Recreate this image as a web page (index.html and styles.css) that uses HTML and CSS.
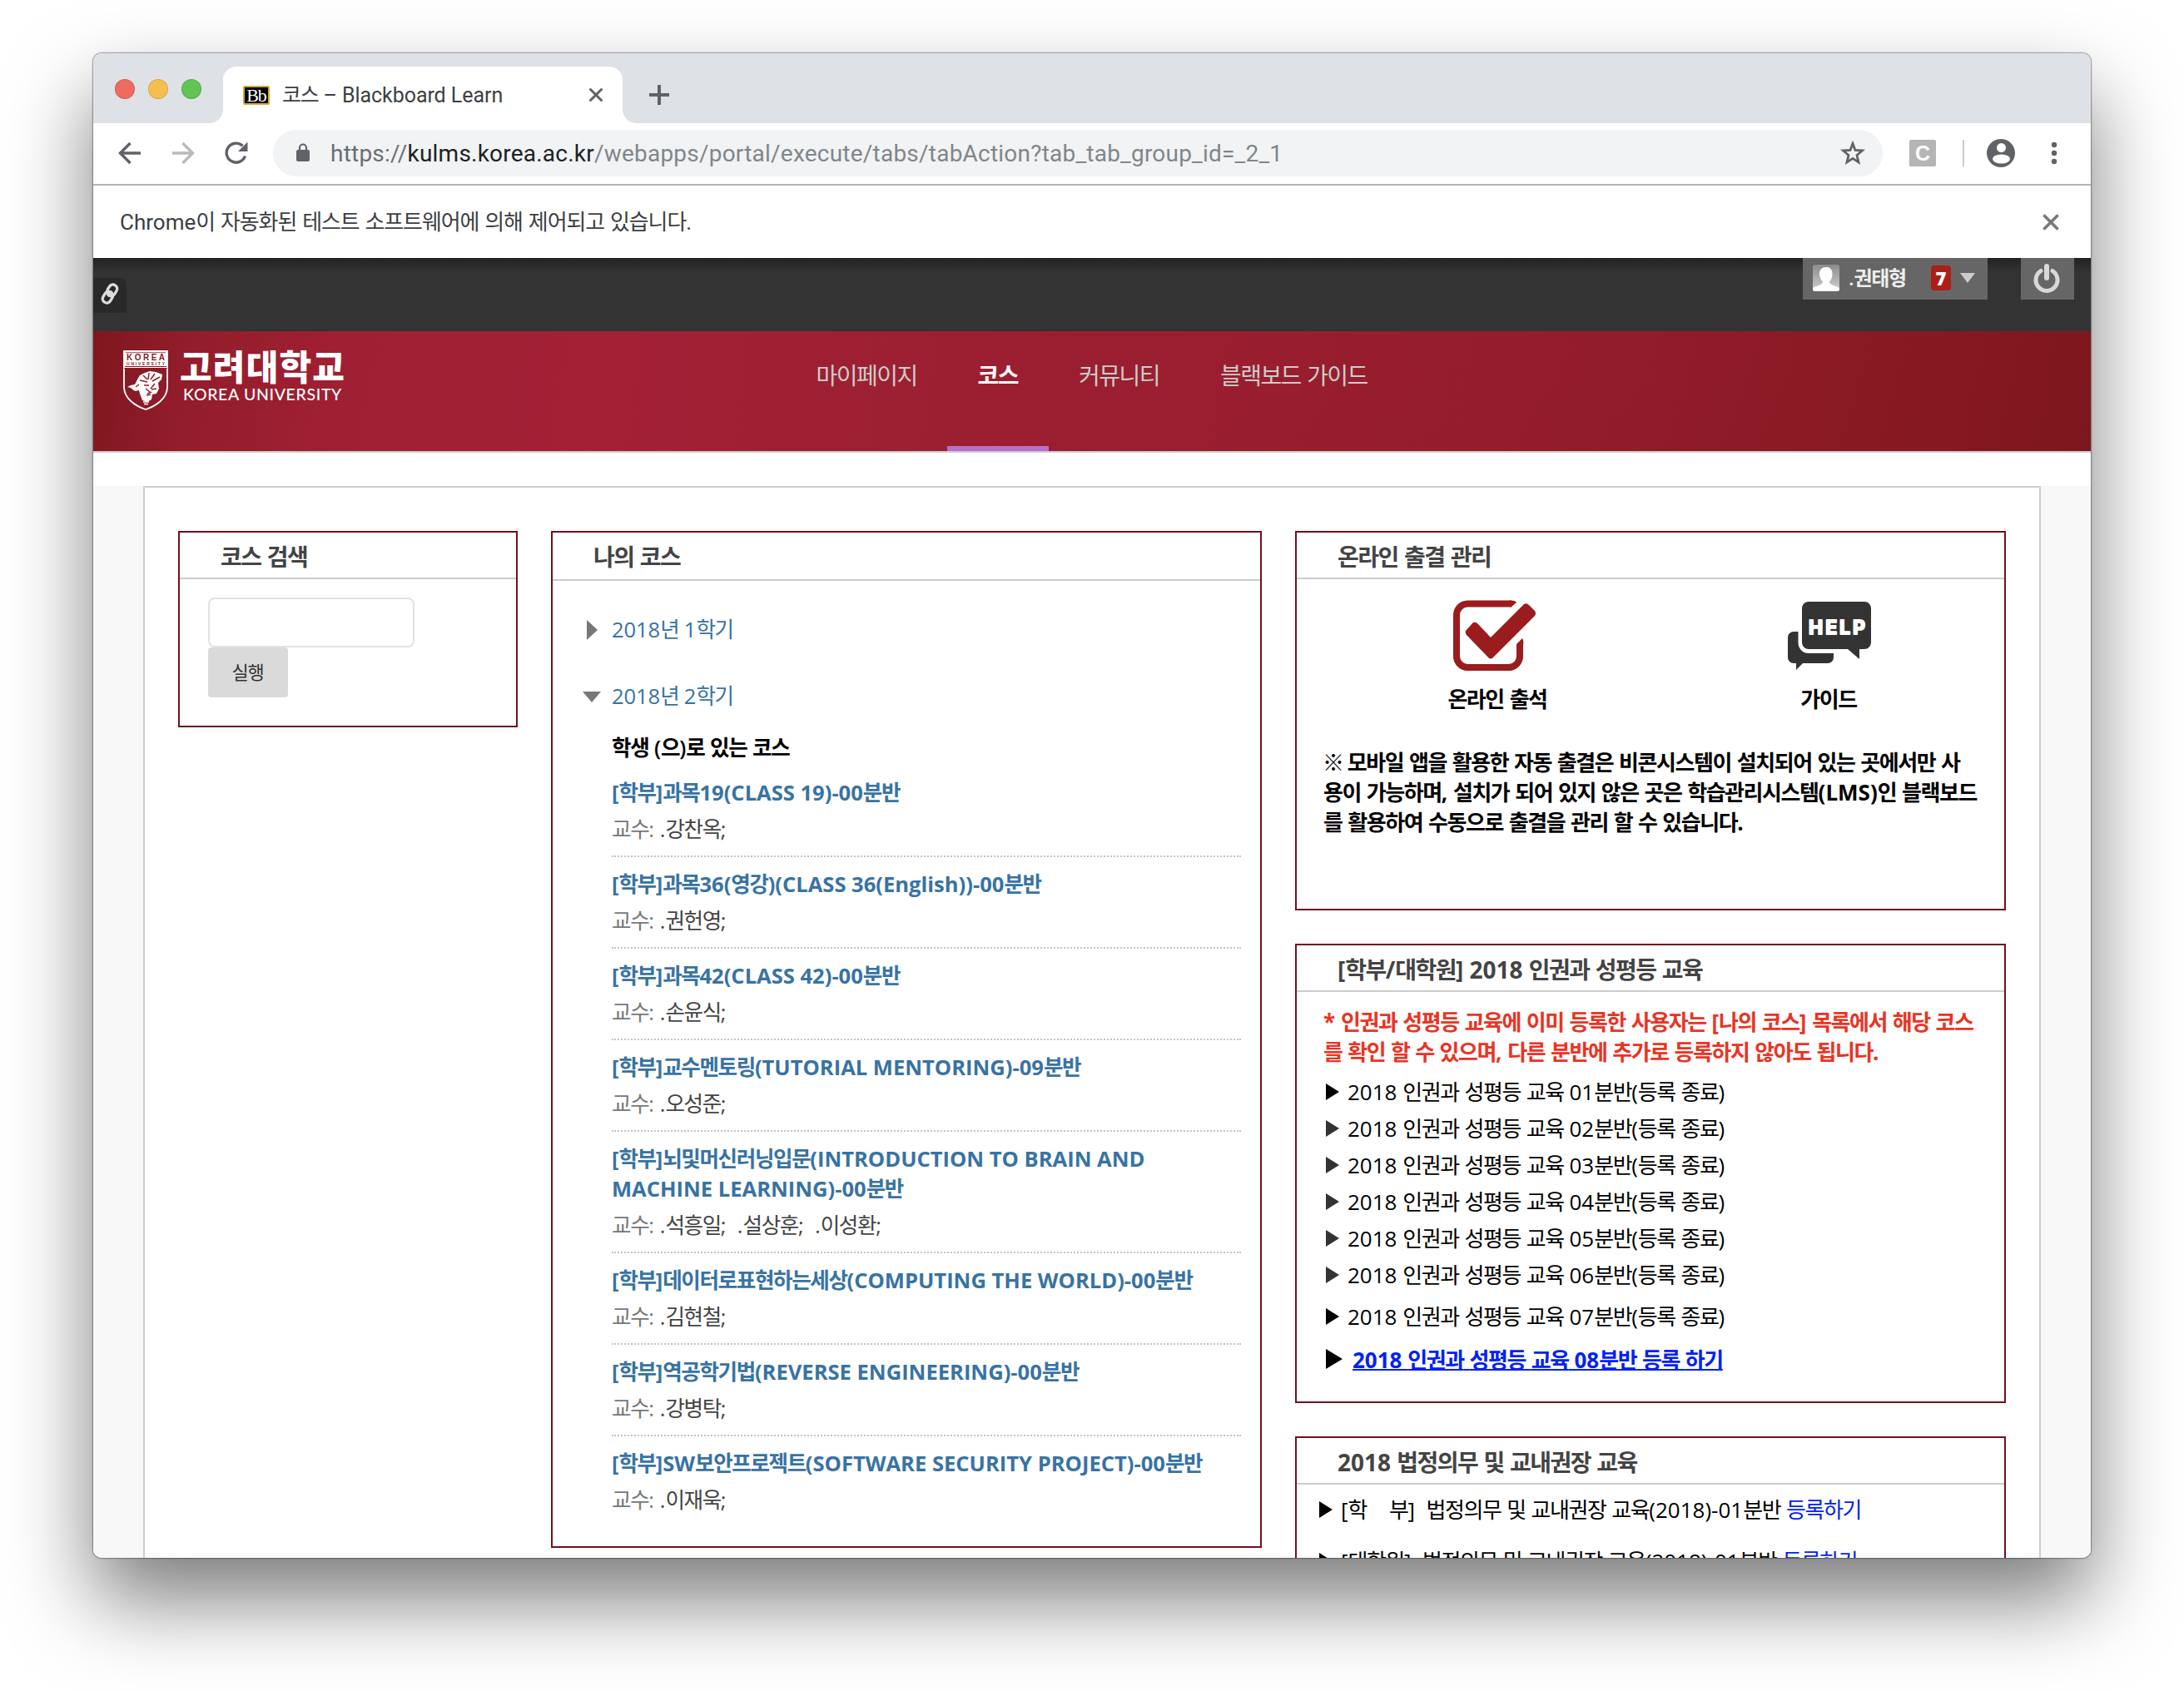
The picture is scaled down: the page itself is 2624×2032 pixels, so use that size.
FILE: index.html
```html
<!DOCTYPE html>
<html lang="ko">
<head>
<meta charset="utf-8">
<title>코스 – Blackboard Learn</title>
<link rel="stylesheet" href="styles.css">
</head>
<body>
<div class="window">
  <div class="tabstrip">
    <div class="lights"><span class="red"></span><span class="yellow"></span><span class="green"></span></div>
    <div class="tab">
      <span class="favicon">Bb</span>
      <span class="tab-title">코스 – Blackboard Learn</span>
      <svg class="tab-close" width="16" height="18" viewBox="0 0 16 18"><path d="M1.5 2.500L14.500 15.500M14.500 2.500L1.500 15.500"/></svg>
    </div>
    <svg class="plus" width="24" height="24" viewBox="0 0 24 24"><path d="M12 0V24M0 12H24"/></svg>
  </div>
  <div class="toolbar">
    <svg class="nav-ico" width="28" height="28" viewBox="0 0 28 28"><path d="M27 14H3M14.500 2L2.500 14L14.500 26"/></svg>
    <svg class="nav-ico off" width="28" height="28" viewBox="0 0 28 28"><path d="M1 14H25M13.500 2L25.500 14L13.500 26"/></svg>
    <svg class="nav-ico" width="30" height="30" viewBox="0 0 30 30"><path d="M25.500 18.500A11.500 11.500 0 1 1 22.500 6.200"/><path class="fill" d="M28.500 1.500V13H17z"/></svg>
    <div class="omnibox">
      <svg width="18" height="24" viewBox="0 0 18 24"><rect x="1" y="8" width="16" height="14" rx="2" fill="#5f6368"/><path d="M5 9V5.500a4 4 0 0 1 8 0V9" fill="none" stroke="#5f6368" stroke-width="2.200"/></svg>
      <span class="url"><span class="scheme">https://</span><b>kulms.korea.ac.kr</b>/webapps/portal/execute/tabs/tabAction?tab_tab_group_id=_2_1</span>
      <svg class="star" width="30" height="30" viewBox="0 0 30 30"><path d="M15 3.500L18 11.500L26.500 12L20 17.500L22 26L15 21.400L8 26L10 17.500L3.500 12L12 11.500z"/></svg>
    </div>
    <span class="ext">C</span>
    <span class="divider"></span>
    <svg class="profile" width="34" height="34" viewBox="0 0 34 34"><circle cx="17" cy="17" r="17" fill="#5f6368"/><circle cx="17.500" cy="10.500" r="5.500" fill="#fff"/><ellipse cx="17.500" cy="24" rx="10.500" ry="5.500" fill="#fff"/></svg>
    <svg class="dots" width="8" height="28" viewBox="0 0 8 28"><circle cx="4" cy="4" r="3.200"/><circle cx="4" cy="14" r="3.200"/><circle cx="4" cy="24" r="3.200"/></svg>
  </div>
  <div class="infobar">
    <span class="message">Chrome이 자동화된 테스트 소프트웨어에 의해 제어되고 있습니다.</span>
    <svg width="20" height="20" viewBox="0 0 20 20"><path d="M2.500 2.500L17.500 17.500M17.500 2.500L2.500 17.500"/></svg>
  </div>
  <div class="globalbar">
    <div class="quick"><svg width="24" height="30" viewBox="0 0 24 30"><g transform="rotate(32 12 15)"><rect x="7" y="3" width="10" height="14" rx="5"/><rect x="7" y="13" width="10" height="14" rx="5"/><path d="M12 11V19"/></g></svg></div>
    <div class="user">
      <svg class="avatar" width="32" height="32" viewBox="0 0 32 32"><defs><linearGradient id="av" x2="0" y2="1"><stop offset="0" stop-color="#8c8c8c"/><stop offset="1" stop-color="#d0d0d0"/></linearGradient></defs><rect width="32" height="32" rx="3" fill="url(#av)"/><path d="M16 3c5 0 7.500 3 7.500 8.500c0 4-1.500 7-3.500 9c0 4 6 4 12 7.500V29a3 3 0 0 1-3 3H3a3 3 0 0 1-3-3V28c6-3.500 12-3.500 12-7.500c-2-2-4-5-4-9C8 6 11 3 16 3z" fill="#fff"/></svg>
      <span class="name">.권태형</span>
      <span class="count">7</span>
      <span class="caret"></span>
    </div>
    <div class="power"><svg width="36" height="36" viewBox="0 0 36 36"><path d="M11 9.500A13 13 0 1 0 25 9.500" stroke-width="5"/><path d="M18 4V18" stroke-width="6"/></svg></div>
  </div>
  <header class="banner">
    <svg class="shield" width="54" height="72" viewBox="0 0 54 72"><path d="M1 1H53V44C53 58 39 67 27 71C15 67 1 58 1 44z" fill="none" stroke="#fff" stroke-width="1.800"/><path d="M1 1H53V19H1z" fill="#fff"/><path d="M3 2.700H51M1 21.500H53" stroke="#8a1a28" stroke-width=".8"/><path d="M1 20.500H53" stroke="#fff" stroke-width="1"/><text x="27" y="11.500" text-anchor="middle" textLength="46" font-size="10">KOREA</text><text x="27" y="18" text-anchor="middle" textLength="46" font-size="5">UNIVERSITY</text><path d="M20 30l6-3 6-2 7 1 8 3-1 6-4 4 1 7-3 6-5 1-1 6-5 3-6-2-3-8-1-4-5 1-5-4-4-1 4-2 5-1 3-6z" fill="#fff"/><path d="M24 30l5 5M31 27l-1 8M38 28l-5 7M44 32l-9 5M20 36l9 2M25 42l6 0M27 46l5 4M38 40l-5 6M19 41l-4 3M34 50l-5 2M40 46l-6 1M28 54l5-1" stroke="#931d2b" stroke-width="1.500" fill="none"/><path d="M24 62h7M25 64.500h5" stroke="#fff" stroke-width="1.600"/></svg>
    <div class="brand"><strong>고려대학교</strong><span>KOREA UNIVERSITY</span></div>
    <nav class="mainnav"><a>마이페이지</a><a class="on">코스</a><a>커뮤니티</a><a>블랙보드 가이드</a></nav>
  </header>
  <main class="page">
    <div class="content">
      <section class="module search">
        <h2>코스 검색</h2>
        <form><input type="text"><button type="button">실행</button></form>
      </section>
      <section class="module courses">
        <h2>나의 코스</h2>
        <div class="term"><span class="tri-r"></span><a>2018년 1학기</a></div>
        <div class="term"><span class="tri-d"></span><a>2018년 2학기</a></div>
        <h3>학생 (으)로 있는 코스</h3>
        <ul>
          <li><a>[학부]과목19(CLASS 19)-00분반</a><p>교수: <span>.강찬옥;</span></p></li>
          <li><a>[학부]과목36(영강)(CLASS 36(English))-00분반</a><p>교수: <span>.권헌영;</span></p></li>
          <li><a>[학부]과목42(CLASS 42)-00분반</a><p>교수: <span>.손윤식;</span></p></li>
          <li><a>[학부]교수멘토링(TUTORIAL MENTORING)-09분반</a><p>교수: <span>.오성준;</span></p></li>
          <li><a>[학부]뇌및머신러닝입문(INTRODUCTION TO BRAIN AND<br>MACHINE LEARNING)-00분반</a><p>교수: <span>.석흥일;&nbsp; .설상훈;&nbsp; .이성환;</span></p></li>
          <li><a>[학부]데이터로표현하는세상(COMPUTING THE WORLD)-00분반</a><p>교수: <span>.김현철;</span></p></li>
          <li><a>[학부]역공학기법(REVERSE ENGINEERING)-00분반</a><p>교수: <span>.강병탁;</span></p></li>
          <li><a>[학부]SW보안프로젝트(SOFTWARE SECURITY PROJECT)-00분반</a><p>교수: <span>.이재욱;</span></p></li>
        </ul>
      </section>
      <div class="right">
        <section class="module attend">
          <h2>온라인 출결 관리</h2>
          <div class="icons">
            <figure class="f1">
              <svg width="102" height="88" viewBox="0 0 102 88"><path d="M71 5.500H18A13.500 13.500 0 0 0 5 19V68A13.500 13.500 0 0 0 18 82H68A13.500 13.500 0 0 0 81 68V54" fill="none" stroke="#9b1c1c" stroke-width="8"/><path d="M68 1.500Q76 1 77 4L70 10z M77 56V54L84 47Q86 49 85 56z" fill="#9b1c1c"/><path d="M16 38L25 28Q28 27 31 30L46 46L86 6Q89 4 92 7L99 14Q101 17 99 20L49 70Q46 73 43 70L17 43Q15 40 16 38z" fill="#9b1c1c"/></svg>
              <figcaption>온라인 출석</figcaption>
            </figure>
            <figure class="f2">
              <svg width="100" height="88" viewBox="0 0 100 88"><path d="M25 3H92a8 8 0 0 1 8 8V52a8 8 0 0 1-8 8H86V72L72 60H25a8 8 0 0 1-8-8V11a8 8 0 0 1 8-8z" fill="#333"/><path d="M7 39H12.500V52A12.500 12.500 0 0 0 25 65H55V70a7 7 0 0 1-7 7H18L10 85V77H7A7 7 0 0 1 0 70V46A7 7 0 0 1 7 39z" fill="#333"/><text x="59" y="41.500" text-anchor="middle" textLength="68" fill="#fff" stroke="#fff" stroke-width="2" stroke-linejoin="round" font-size="23" font-weight="bold">HELP</text></svg>
              <figcaption>가이드</figcaption>
            </figure>
          </div>
          <p class="note"><span class="mark">※</span> 모바일 앱을 활용한 자동 출결은 비콘시스템이 설치되어 있는 곳에서만 사<br>용이 가능하며, 설치가 되어 있지 않은 곳은 학습관리시스템(LMS)인 블랙보드<br>를 활용하여 수동으로 출결을 관리 할 수 있습니다.</p>
        </section>
        <section class="module rights">
          <h2>[학부/대학원] 2018 인권과 성평등 교육</h2>
          <p class="note alert">* 인권과 성평등 교육에 이미 등록한 사용자는 [나의 코스] 목록에서 해당 코스<br>를 확인 할 수 있으며, 다른 분반에 추가로 등록하지 않아도 됩니다.</p>
          <ul class="arrows">
            <li class="dark">2018 인권과 성평등 교육 01분반(등록 종료)</li>
            <li>2018 인권과 성평등 교육 02분반(등록 종료)</li>
            <li>2018 인권과 성평등 교육 03분반(등록 종료)</li>
            <li>2018 인권과 성평등 교육 04분반(등록 종료)</li>
            <li>2018 인권과 성평등 교육 05분반(등록 종료)</li>
            <li>2018 인권과 성평등 교육 06분반(등록 종료)</li>
            <li class="dark seven">2018 인권과 성평등 교육 07분반(등록 종료)</li>
            <li class="dark open"><a>2018 인권과 성평등 교육 08분반 등록 하기</a></li>
          </ul>
        </section>
        <section class="module legal">
          <h2>2018 법정의무 및 교내권장 교육</h2>
          <ul class="arrows">
            <li class="dark"><span class="pre">[학    부]  법정의무 및 교내권장 교육(2018)-01분반 </span><a>등록하기</a></li>
            <li class="dark"><span class="pre">[대학원]  법정의무 및 교내권장 교육(2018)-01분반 </span><a>등록하기</a></li>
          </ul>
        </section>
      </div>
    </div>
  </main>
</div>
<script src="hangul.js"></script>
</body>
</html>
```
FILE: hangul.js
```js
// Wrap each run of Hangul so it can be tracked tighter than the Latin text around it.
const walker = document.createTreeWalker(document.querySelector('.window'), NodeFilter.SHOW_TEXT);
const nodes = [];
while (walker.nextNode()) nodes.push(walker.currentNode);
for (const node of nodes) {
  if (!/[가-힣]/.test(node.data) || node.parentNode.closest('svg')) continue;
  const out = document.createDocumentFragment();
  for (const part of node.data.split(/([가-힣]+)/)) {
    if (!part) continue;
    if (/[가-힣]/.test(part)) {
      const s = document.createElement('span');
      s.className = 'ko';
      s.textContent = part;
      out.append(s);
    } else out.append(part);
  }
  const wrap = document.createElement('span');
  wrap.append(out);
  node.replaceWith(wrap);
}
```
FILE: styles.css
```css
* { box-sizing: border-box; }
body { margin: 0; width: 2624px; height: 2032px; overflow: hidden; background: #fff; padding: 64px 112px 0; font-family: "Open Sans", "Noto Sans CJK KR", sans-serif; font-size: 26px; color: #000; }
h2, h3, p, ul, figure { margin: 0; padding: 0; }
ul { list-style: none; }
.ko { letter-spacing: -0.055em; }

.window { width: 2400px; height: 1808px; border-radius: 10px; overflow: hidden; background: #fff; box-shadow: 0 0 0 1px rgba(0,0,0,.2), 0 0 3px rgba(0,0,0,.4), 0 50px 100px rgba(0,0,0,.52); display: flex; flex-direction: column; }

.tabstrip { height: 84px; flex: none; background: #dee1e6; display: flex; padding-left: 26px; }
.lights { display: flex; gap: 16px; padding-top: 31px; width: 130px; }
.lights span { width: 24px; height: 24px; border-radius: 50%; border: 1px solid rgba(0,0,0,.12); }
.red { background: #ed6b5f; }
.yellow { background: #f5bf4f; }
.green { background: #61c454; }
.tab { position: relative; width: 480px; height: 68px; margin-top: 16px; background: #fff; border-radius: 16px 16px 0 0; display: flex; align-items: center; padding: 0 24px; font-family: Roboto, "Noto Sans CJK KR", sans-serif; font-size: 25px; color: #3c4043; }
.tab::before, .tab::after { content: ""; position: absolute; bottom: 0; width: 16px; height: 16px; }
.tab::before { left: -16px; background: radial-gradient(circle at 0 0, transparent 15.500px, #fff 16px); }
.tab::after { right: -16px; background: radial-gradient(circle at 100% 0, transparent 15.500px, #fff 16px); }
.favicon { width: 32px; height: 23px; margin-right: 15px; background: #000; border: 2px solid #d9a92e; border-radius: 2px; color: #fff; font: 22px/19px "Liberation Serif", serif; text-align: center; letter-spacing: -1px; }
.tab-title { flex: 1; white-space: nowrap; padding-bottom: 4px; letter-spacing: -.05px; }
.tab-close, .plus, .infobar svg { fill: none; stroke: #5f6368; stroke-width: 3; stroke-linecap: round; }
.plus { margin: 38px 0 0 32px; stroke-width: 4; stroke-linecap: butt; }

.toolbar { height: 75px; flex: none; border-bottom: 2px solid #b5b5b5; display: flex; align-items: center; padding: 0 40px 1px 30px; background: #fff; }
.nav-ico { fill: none; stroke: #5f6368; stroke-width: 3.400; margin-right: 36px; flex: none; }
.nav-ico + .nav-ico { margin-right: 35px; }
.nav-ico.off { stroke: #bababa; }
.nav-ico .fill { fill: #5f6368; stroke: none; }
.omnibox { width: 1934px; height: 56px; margin-left: -6px; border-radius: 28px; background: #f1f3f4; display: flex; align-items: center; padding: 0 21px 0 27px; font-family: Roboto, sans-serif; font-size: 28px; color: #80868b; }
.url { flex: 1; margin-left: 24px; white-space: nowrap; letter-spacing: .22px; }
.url b { font-weight: 400; color: #202124; }
.scheme { color: #6a6e73; }
.star { fill: none; stroke: #5f6368; stroke-width: 2.800; }
.ext { width: 32px; height: 32px; margin-left: 32px; background: #b5b5b5; border-radius: 2px; color: #fff; font: bold 25px/32px "Liberation Sans", sans-serif; text-align: center; }
.divider { width: 2px; height: 32px; margin-left: 32px; background: #ccc; }
.profile { margin-left: 27px; }
.dots { margin-left: 43px; fill: #5f6368; }

.infobar { height: 87px; flex: none; background: #fff; padding: 0 38px 0 32px; display: flex; align-items: center; justify-content: space-between; font-family: Roboto, "Noto Sans CJK KR", sans-serif; font-size: 26px; color: #3c4043; }
.message { padding-bottom: 4px; word-spacing: .5px; }
.infobar .ko { letter-spacing: -.043em; }
.infobar svg { stroke: #777a7d; stroke-width: 3.600; }

.globalbar { height: 88px; flex: none; background: linear-gradient(#222, #333 16px); display: flex; }
.quick { width: 40px; height: 42px; margin-top: 24px; background: #292929; border-radius: 0 8px 0 0; padding: 4px 0 0 8px; }
.quick svg { display: block; fill: none; stroke: #ddd; stroke-width: 3.400; }
.user { width: 222px; height: 50px; margin-left: 2014px; background: #666; display: flex; align-items: center; padding: 0 13px 2px 12px; color: #fff; font-size: 24px; }
.name { margin-left: 11px; width: 99px; line-height: 44px; font-weight: 600; color: #eee; white-space: nowrap; }
.count { width: 24px; height: 30px; border-radius: 4px; background: #aa1f17; font-weight: 800; font-size: 22px; line-height: 30px; text-align: center; }
.caret { margin-left: 11px; border: 9.500px solid transparent; border-top: 12px solid #ccc; border-bottom: 0; }
.power { width: 64px; height: 50px; margin-left: 40px; background: #666; padding: 6px 0 0 13px; }
.power svg { fill: none; stroke: #d8d8d8; stroke-linecap: round; }

.banner { height: 146px; flex: none; border-bottom: 2px solid #ccc; background: linear-gradient(172deg, transparent 60%, rgba(120,20,30,.06)), linear-gradient(97deg, #7f171f 0, #931d2b 5%, #a02033 13%, #a32035 26%, #9c1f31 42%, #9a1e2f 56%, #931c2b 75%, #851820 94%, #7d171e 100%); display: flex; color: #fff; }
.shield { margin: 23px 0 0 36px; flex: none; }
.shield text { fill: #8a1a28; font-family: "Liberation Sans", sans-serif; font-weight: bold; }
.brand { width: 762px; padding: 16px 0 0 14px; display: flex; flex-direction: column; }
.brand strong { font: 900 42px/50px "Noto Sans CJK KR", sans-serif; white-space: nowrap; }
.brand strong .ko { letter-spacing: 1.200px; }
.brand > span { font: 500 19.500px/20px Lato, sans-serif; padding-left: 4px; letter-spacing: .650px; white-space: nowrap; }
.mainnav { display: flex; margin-left: -20px; }
.mainnav a { height: 144px; padding: 0 36.500px; font-size: 28px; line-height: 106px; color: #ccc; border-bottom: 6px solid transparent; white-space: nowrap; }
.mainnav .on { color: #fff; font-weight: 700; border-color: #b86fcb; }

.page { flex: 1; min-height: 0; margin-top: 40px; padding: 0 60px; background: #f8f8f8; }
.content { height: 1400px; border: 2px solid #ccc; background: #fff; padding: 52px 40px; display: flex; gap: 40px; align-items: flex-start; }
.module { border: 2px solid #70101d; background: #fff; }
.module h2 { height: 56px; border-bottom: 2px solid #ccc; padding-left: 49px; font-size: 28px; line-height: 58px; font-weight: 700; color: #444; white-space: nowrap; }
.search { width: 408px; height: 236px; }
.search form { padding: 22px 34px; display: flex; flex-direction: column; align-items: flex-start; }
.search input { width: 248px; height: 60px; border: 2px solid #e3e3e3; border-radius: 8px; background: #fff; }
.search button { width: 96px; height: 60px; border: 0; border-radius: 4px; background: #dadada; color: #333; font-family: inherit; font-size: 22px; padding: 0 1px 4px 0; }
.courses { width: 854px; height: 1222px; font-size: 25.600px; }
.courses h2 { height: 58px; }
.term { display: flex; align-items: center; height: 36px; margin-top: 42px; padding-left: 36px; color: #3873a3; }
.term + .term { margin-top: 44px; }
h2 + .term { margin-top: 41px; }
.term a { line-height: 36px; padding-bottom: 1px; letter-spacing: -.1px; }
.tri-r { border: 12px solid transparent; border-left: 13px solid #777; border-right: 0; margin: 0 17px 0 5px; }
.tri-d { border: 11px solid transparent; border-top: 13px solid #777; border-bottom: 0; margin-right: 13px; }
.courses h3 { margin: 26px 0 0 71px; font-size: 25.600px; line-height: 36px; font-weight: 600; }
.courses ul { margin: 3px 23px 0 71px; }
.courses li { padding: 15px 0 13px; border-bottom: 2px dotted #c4c4c4; line-height: 36px; white-space: nowrap; }
.courses li:last-child { border: 0; }
.courses li a { display: block; margin-bottom: 8px; color: #3873a3; font-weight: 700; letter-spacing: -.02px; }
.courses li p { color: #777; }
.courses li p > span + span { color: #444; }

.right { width: 854px; display: flex; flex-direction: column; gap: 40px; }
.attend { height: 456px; }
.icons { position: relative; height: 186px; }
.icons figure { position: absolute; top: 24px; text-align: center; width: 240px; }
.f1 { left: 121px; }
.f2 { left: 519px; }
.icons figcaption { margin-top: 14px; line-height: 36px; font-weight: 600; }
.icons svg { display: inline-block; vertical-align: top; }
.f1 svg { margin-right: 7px; }
.f2 svg { margin-left: 2px; }
.f2 text { font-family: Inter, sans-serif; }
.note { padding-left: 32px; line-height: 36px; font-weight: 700; white-space: nowrap; margin-top: 16px; }
.mark { letter-spacing: -3px; margin-left: -1px; }
.rights { height: 552px; }
.alert { color: #eb3323; margin-top: 18px; }
.arrows li { height: 44px; line-height: 42px; padding-left: 35px; display: flex; align-items: center; white-space: nowrap; }
.arrows li > span, .arrows li > a { padding-bottom: 2px; }
.arrows li::before { content: ""; border: 10px solid transparent; border-left: 16px solid #333; border-right: 0; margin-right: 10px; margin-top: -2px; }
.arrows li.dark::before { border-left-color: #000; }
.rights .arrows { padding-top: 9px; }
.arrows .seven { margin-top: 6px; }
.arrows .open { margin-top: 8px; font-weight: 700; }
.arrows .open::before { border-width: 12px 0 12px 20px; margin-right: 12px; margin-top: -4px; }
.arrows a { color: #0021f5; }
.arrows .open a { text-decoration: underline; text-decoration-thickness: 2px; }
.legal { height: 400px; }
.legal .arrows { padding-top: 9px; }
.legal .arrows li { padding-left: 27px; margin-bottom: 18px; }
.pre { white-space: pre; }
```
